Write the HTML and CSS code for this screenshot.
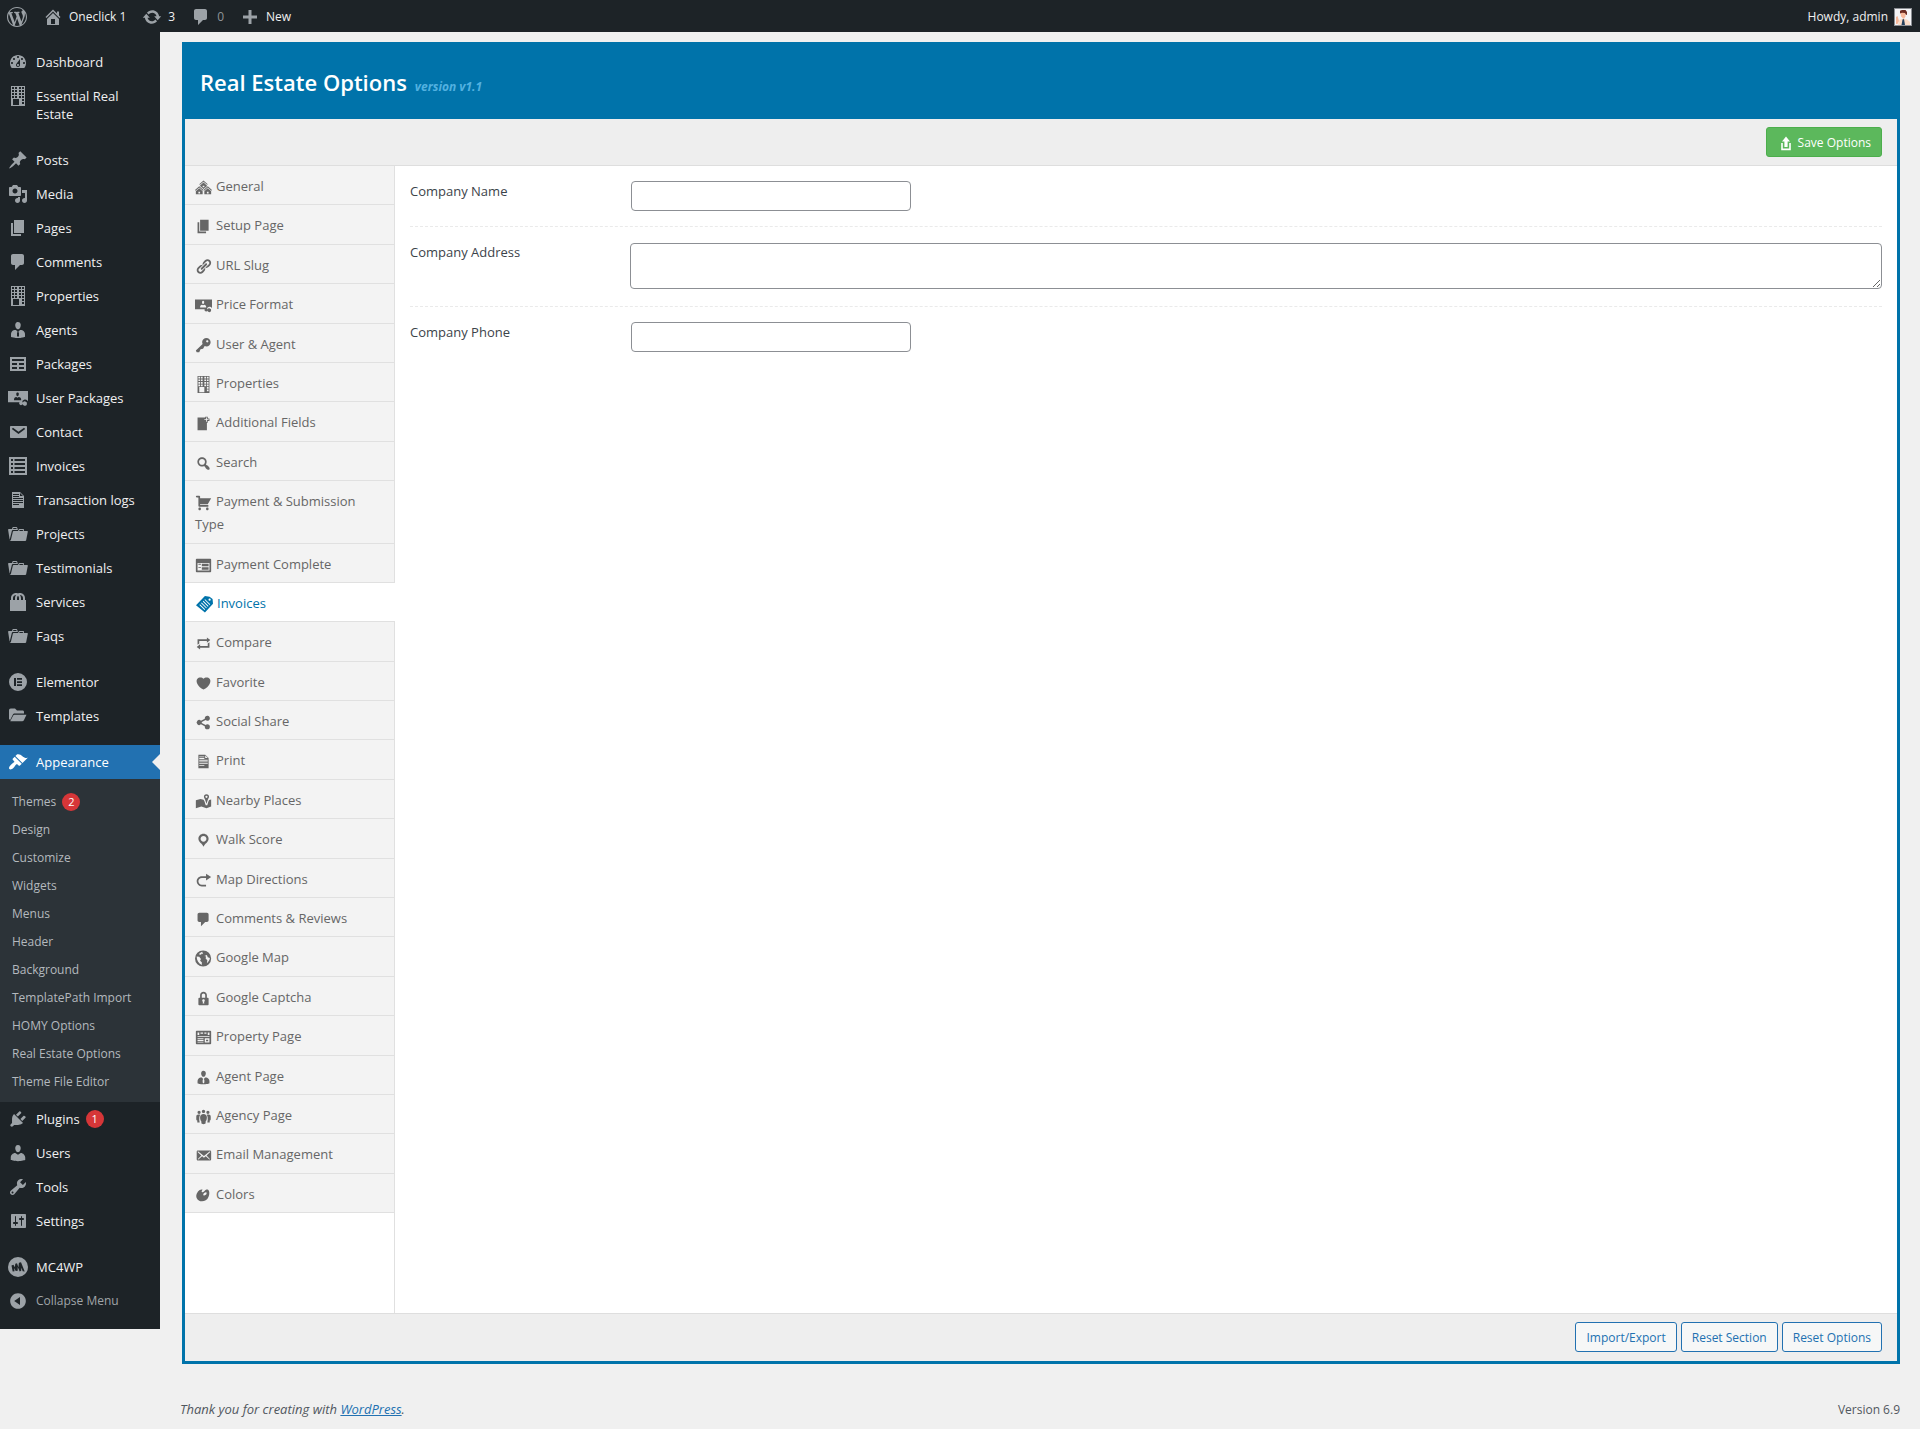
FILE: index.html
```html
<!DOCTYPE html>
<html lang="en">
<head>
<meta charset="utf-8">
<title>Real Estate Options</title>
<link rel="stylesheet" href="styles.css">
</head>
<body>
<svg class="sprite" aria-hidden="true">
  <symbol id="wordpress" viewBox="0 0 20 20"><path d="M20 10c0-5.51-4.49-10-10-10C4.48 0 0 4.49 0 10c0 5.52 4.48 10 10 10 5.51 0 10-4.48 10-10zM7.78 15.37L4.37 6.22c.55-.02 1.17-.08 1.17-.08.5-.06.44-1.13-.06-1.11 0 0-1.45.11-2.37.11-.18 0-.37 0-.58-.01C4.12 2.69 6.87 1.11 10 1.11c2.33 0 4.45.87 6.05 2.34-.68-.11-1.65.39-1.65 1.58 0 .74.45 1.36.9 2.1.35.61.55 1.36.55 2.46 0 1.49-1.4 5-1.4 5l-3.03-8.37c.54-.02.82-.17.82-.17.5-.05.44-1.25-.06-1.22 0 0-1.44.12-2.38.12-.87 0-2.33-.12-2.33-.12-.5-.03-.56 1.2-.06 1.22l.92.08 1.26 3.41zM17.41 10c.24-.64.74-1.87.43-4.25.7 1.29 1.05 2.71 1.05 4.25 0 3.29-1.73 6.24-4.4 7.78.97-2.59 1.94-5.2 2.92-7.78zM6.1 18.09C3.12 16.65 1.11 13.53 1.11 10c0-1.3.23-2.48.72-3.59C3.25 10.3 4.67 14.2 6.1 18.09zm4.03-6.63l2.58 6.98c-.86.29-1.76.45-2.71.45-.79 0-1.57-.11-2.29-.33.81-2.38 1.62-4.74 2.42-7.1z"/></symbol>
  <symbol id="home" viewBox="0 0 20 20"><path d="M16 8.5l1.53 1.53-1.06 1.06L10 4.6l-6.47 6.49-1.06-1.06L10 2.5l4 4v-2h2v4zm-6-2.46l6 5.99V18H4v-5.97zM12 17v-5H8v5h4z"/></symbol>
  <symbol id="update" viewBox="0 0 20 20"><path d="M10.2 3.28c3.53 0 6.43 2.61 6.92 6h2.08l-3.5 4-3.5-4h2.32c-.45-1.97-2.21-3.45-4.32-3.45-1.45 0-2.73.71-3.54 1.78L4.95 5.66C6.23 4.2 8.11 3.28 10.2 3.28zm-.4 13.44c-3.52 0-6.43-2.61-6.92-6H.8l3.5-4c1.17 1.33 2.33 2.67 3.5 4H5.48c.45 1.97 2.21 3.45 4.32 3.45 1.45 0 2.73-.71 3.54-1.78l1.71 1.95c-1.28 1.46-3.15 2.38-5.25 2.38z"/></symbol>
  <symbol id="plus" viewBox="0 0 20 20"><path d="M17 8.5v3h-5.500v5.500h-3v-5.500H3v-3h5.500V3h3v5.500z"/></symbol>
  <symbol id="dashboard" viewBox="0 0 20 20"><path d="M3.76 16h12.48c1.1-1.37 1.76-3.11 1.76-5 0-4.42-3.58-8-8-8s-8 3.58-8 8c0 1.89.66 3.63 1.76 5zM10 4c.55 0 1 .45 1 1s-.45 1-1 1-1-.45-1-1 .45-1 1-1zM6 6c.55 0 1 .45 1 1s-.45 1-1 1-1-.45-1-1 .45-1 1-1zm8 0c.55 0 1 .45 1 1s-.45 1-1 1-1-.45-1-1 .45-1 1-1zm-5.37 5.550L12 7v6c0 1.100-.9 2-2 2s-2-.9-2-2c0-.57.24-1.080.63-1.450zM4 10c.55 0 1 .45 1 1s-.45 1-1 1-1-.45-1-1 .45-1 1-1zm12 0c.55 0 1 .45 1 1s-.45 1-1 1-1-.45-1-1 .45-1 1-1zm-5 3c0-.55-.45-1-1-1s-1 .45-1 1 .45 1 1 1 1-.45 1-1z"/></symbol>
  <symbol id="building" viewBox="0 0 20 20"><path fill-rule="evenodd" d="M3 0h14v20H3zM4 1h2v2H4zM7 1h2v2H7zM11 1h2v2h-2zM14 1h2v2h-2zM4 4h2v2H4zM7 4h2v2H7zM11 4h2v2h-2zM14 4h2v2h-2zM4 7h2v2H4zM7 7h2v2H7zM11 7h2v2h-2zM14 7h2v2h-2zM4 10h2v2H4zM7 10h2v2H7zM11 10h2v2h-2zM14 10h2v2h-2zM5 13h6v6H5zM14 13h2v2h-2zM14 16h2v2h-2z"/></symbol>
  <symbol id="pin" viewBox="0 0 20 20"><path d="M10.44 3.020l1.820-1.820 6.360 6.350-1.830 1.820c-1.050-.68-2.480-.57-3.410.36l-.75.75c-.92.93-1.040 2.350-.35 3.410l-1.830 1.820-2.410-2.410-2.800 2.790c-.42.42-3.380 2.710-3.800 2.290s1.860-3.390 2.280-3.810l2.790-2.790L4.100 9.360l1.830-1.820c1.050.69 2.480.57 3.400-.36l.75-.75c.93-.92 1.050-2.350.36-3.410z"/></symbol>
  <symbol id="media" viewBox="0 0 20 20"><path d="M13 11V4c0-.55-.45-1-1-1h-1.670L9 1H5L3.670 3H2c-.55 0-1 .45-1 1v7c0 .55.45 1 1 1h10c.55 0 1-.45 1-1zM7 4.500c1.380 0 2.500 1.120 2.500 2.500S8.380 9.500 7 9.500 4.500 8.380 4.500 7 5.620 4.500 7 4.500zM14 6h5v10.500c0 1.380-1.120 2.500-2.500 2.500S14 17.880 14 16.500s1.120-2.500 2.500-2.500c.17 0 .34.02.5.05V9h-3V6zm-4 8.050V13h2v3.500c0 1.380-1.120 2.500-2.500 2.500S7 17.880 7 16.500 8.120 14 9.500 14c.17 0 .34.02.5.05z"/></symbol>
  <symbol id="page" viewBox="0 0 20 20"><path d="M6 15V2h10v13H6zm-1 1h8v2H3V5h2v11z"/></symbol>
  <symbol id="comment" viewBox="0 0 20 20"><path d="M5 2h9c1.100 0 2 .9 2 2v7c0 1.100-.9 2-2 2h-2l-5 5v-5H5c-1.100 0-2-.9-2-2V4c0-1.100.9-2 2-2z"/></symbol>
  <symbol id="agent" viewBox="0 0 20 20"><path d="M7.300 6l-.03-.19c-.04-.37-.05-.73-.03-1.080.02-.36.1-.71.25-1.040.14-.32.31-.61.52-.86s.49-.46.83-.6c.34-.15.72-.23 1.130-.23.69 0 1.260.2 1.710.59s.76.87.91 1.440.18 1.160.09 1.780l-.03.19c-.01.09-.05.25-.11.48-.05.24-.12.47-.2.69-.08.21-.19.45-.34.72-.14.27-.3.49-.47.69-.18.19-.4.34-.67.48-.27.13-.55.19-.86.19s-.59-.06-.87-.19c-.26-.13-.49-.29-.67-.5-.18-.2-.34-.42-.49-.66-.15-.25-.26-.49-.34-.73-.09-.25-.16-.47-.21-.67-.06-.21-.1-.37-.12-.5zm9.200 6.240c.41.7.5 1.410.5 2.140v2.490c0 .03-.12.08-.29.13-.18.04-.42.13-.97.27-.55.12-1.100.24-1.650.34s-1.190.19-1.950.27c-.75.08-1.460.12-2.130.12-.68 0-1.390-.04-2.140-.12-.75-.07-1.400-.17-1.980-.27-.58-.11-1.080-.23-1.560-.34-.49-.11-.8-.21-1.060-.29L3 16.870v-2.490c0-.75.07-1.460.46-2.150s.81-1.250 1.500-1.680C5.660 10.120 7.190 10 8 10l1.670 1.670L9 13v3l1.020 1.080L11 16v-3l-.68-1.330L11.970 10c.77 0 2.200.07 2.900.52.71.45 1.210 1.020 1.630 1.720z"/></symbol>
  <symbol id="table" viewBox="0 0 20 20"><path d="M18 17V3H2v14h16zM16 7H4V5h12v2zm-7 4H4V9h5v2zm7 0h-5V9h5v2zm-7 4H4v-2h5v2zm7 0h-5v-2h5v2z"/></symbol>
  <symbol id="money" viewBox="0 0 20 20"><path fill-rule="evenodd" d="M0 3h20v10.200a3.200 3.200 0 0 0-6 1.100H0zM8.300 5.600c-.2 1.700.4 2.600 1.200 2.600s1.500-.9 1.300-2.600c-.2-1.400-2.300-1.400-2.500 0zM6 12.300h7.200c.1-2.300-1-3.200-2.500-3.300l-1.200.8L8.300 9C6.800 9.100 6 10 6 12.300z"/><path d="M11.200 14.800a1.900 1.900 0 1 1 2.300 2.300 1.900 1.900 0 0 1-2.300-2.300zM14.700 15a2.200 2.200 0 1 1 1.500 2.700 2.200 2.200 0 0 1-1.500-2.700z"/></symbol>
  <symbol id="mail" viewBox="0 0 20 20"><path fill-rule="evenodd" d="M3 4h15c.6 0 1 .4 1 1v10c0 .6-.4 1-1 1H3c-.6 0-1-.4-1-1V5c0-.6.4-1 1-1zm7.500 8.100L17.200 7l-1.200-1.300-5.500 4.100L5 5.700 3.800 7z"/></symbol>
  <symbol id="list" viewBox="0 0 20 20"><path fill-rule="evenodd" d="M1 1h18v18H1zM3 3h2v2H3zM6.500 3H17v2H6.500zM3 7h2v2H3zM6.500 7H17v2H6.500zM3 11h2v2H3zM6.500 11H17v2H6.500zM3 15h2v2H3zM6.500 15H17v2H6.500z"/></symbol>
  <symbol id="doc" viewBox="0 0 20 20"><path fill-rule="evenodd" d="M12 2l4 4v12H4V2zM5 4v1h6V4zM12 3v3h3zM5 6v1h6V6zM5 8v1h10V8zM5 10v1h10v-1zM5 12v1h10v-1zM5 14v1h6v-1z"/></symbol>
  <symbol id="portfolio" viewBox="0 0 20 20"><path d="M4 5H.78c-.37 0-.74.32-.69.84l1.560 9.990S3.500 8.470 3.860 6.700c.11-.53.61-.7.98-.7H10s-.7-2.080-.77-2.310C9.110 3.250 8.890 3 8.450 3H5.140c-.36 0-.7.23-.8.64C4.250 4.040 4 5 4 5zm4.880 0h-4s.42-1 .87-1h2.130c.48 0 1 1 1 1zM2.670 16.250c-.31.47-.76.75-1.260.75h15.730c.54 0 .92-.31 1.030-.83.44-2.190 1.680-8.440 1.680-8.440.07-.5-.3-.73-.62-.73H16V5.530c0-.16-.26-.53-.66-.53h-3.760c-.52 0-.87.58-.87.58L10 7H5.590c-.32 0-.63.19-.69.5 0 0-1.590 6.700-1.720 7.330-.07.37-.22.99-.51 1.420zM15.380 7H11s.58-1 1.130-1h2.290c.71 0 .96 1 .96 1z"/></symbol>
  <symbol id="products" viewBox="0 0 20 20"><path d="M17 8h1v11H2V8h1V6c0-2.760 2.240-5 5-5 .71 0 1.390.15 2 .42.61-.27 1.290-.42 2-.42 2.760 0 5 2.240 5 5v2zM5 6v2h2V6c0-1.130.39-2.160 1.020-3H8C6.350 3 5 4.350 5 6zm10 2V6c0-1.650-1.350-3-3-3h-.02c.63.84 1.020 1.870 1.020 3v2h2zm-5-4.220C9.390 4.330 9 5.120 9 6v2h2V6c0-.88-.39-1.670-1-2.220z"/></symbol>
  <symbol id="elementor" viewBox="0 0 20 20"><path fill-rule="evenodd" d="M10 1a9 9 0 1 1 0 18 9 9 0 0 1 0-18zM6 6v8h2V6zM9 6v1.700h5V6zM9 9.200v1.700h5V9.200zM9 12.300V14h5v-1.700z"/></symbol>
  <symbol id="folder" viewBox="0 0 20 20"><path d="M1 4.500c0-1.300.6-2 1.800-2H7l2 2h5.500c.9 0 1.500.5 1.500 1.500v1.500H6.800c-1 0-1.600.4-2 1.200L2.200 14 1 13zM6.500 8.800H18.500l-2.600 5.400c-.4.700-1 1-1.800 1H2.200L5.100 9.700c.3-.6.700-.9 1.400-.9z"/></symbol>
  <symbol id="brush" viewBox="0 0 20 20"><path d="M14.480 11.060L7.410 3.990l1.500-1.500c.5-.56 2.300-.47 3.510.32 1.210.8 1.430 1.280 2.910 2.100 1.180.64 2.450 1.260 4.450.85zm-.71.71L6.700 4.700 4.930 6.470c-.39.39-.39 1.020 0 1.410l1.060 1.060c.39.39.39 1.030 0 1.420-.6.6-1.430 1.110-2.210 1.690-.35.26-.7.53-1.010.84C1.430 14.230.4 16.080 1.400 17.070c.99 1 2.840-.03 4.180-1.360.31-.31.58-.66.85-1.020.57-.78 1.080-1.610 1.690-2.210.39-.39 1.020-.39 1.410 0l1.060 1.060c.39.39 1.020.39 1.410 0z"/></symbol>
  <symbol id="plugin" viewBox="0 0 20 20"><path d="M13.110 4.360L9.870 7.600 8 5.730l3.240-3.240c.35-.34 1.050-.2 1.560.32.52.51.66 1.210.31 1.550zm-8 1.770l.91-1.120 9.010 9.010-1.190.84c-.71.71-2.630 1.160-3.820 1.160H6.140L4.900 17.260c-.59.59-1.540.59-2.120 0-.59-.58-.59-1.530 0-2.120l1.240-1.240v-3.880c0-1.130.4-3.190 1.090-3.890zm7.260 3.970l3.240-3.240c.34-.35 1.040-.21 1.550.31.52.51.66 1.210.31 1.550l-3.240 3.250z"/></symbol>
  <symbol id="user" viewBox="0 0 20 20"><path d="M10 9.250c-2.270 0-2.730-3.440-2.730-3.440C7 4.020 7.820 2 9.970 2c2.160 0 2.980 2.020 2.710 3.810 0 0-.41 3.440-2.680 3.440zm0 2.570L12.720 10c2.390 0 4.520 2.330 4.520 4.530v2.490s-3.650 1.130-7.240 1.130c-3.650 0-7.240-1.130-7.240-1.130v-2.490c0-2.250 1.940-4.480 4.470-4.480z"/></symbol>
  <symbol id="wrench" viewBox="0 0 20 20"><path d="M16.680 9.770c-1.340 1.340-3.300 1.670-4.950.99l-5.410 6.520c-.99.99-2.590.99-3.580 0s-.99-2.590 0-3.570l6.520-5.420c-.68-1.650-.35-3.610.99-4.950 1.280-1.280 3.120-1.620 4.720-1.060l-2.890 2.890 2.820 2.820 2.860-2.870c.53 1.580.18 3.390-1.080 4.650zM3.810 16.210c.4.39 1.040.39 1.430 0 .4-.4.4-1.040 0-1.430-.39-.4-1.030-.4-1.430 0-.39.39-.39 1.030 0 1.430z"/></symbol>
  <symbol id="settings" viewBox="0 0 20 20"><path d="M18 16V4c0-.55-.45-1-1-1H4c-.55 0-1 .45-1 1v12c0 .55.45 1 1 1h13c.55 0 1-.45 1-1zM8 11h1c.55 0 1 .45 1 1s-.45 1-1 1H8v1.500c0 .28-.22.5-.5.5s-.5-.22-.5-.5V13H6c-.55 0-1-.45-1-1s.45-1 1-1h1V5.500c0-.28.22-.5.5-.5s.5.22.5.5V11zm5-2h-1c-.55 0-1-.45-1-1s.45-1 1-1h1V5.500c0-.28.22-.5.5-.5s.5.22.5.5V7h1c.55 0 1 .45 1 1s-.45 1-1 1h-1v5.500c0 .28-.22.5-.5.5s-.5-.22-.5-.5V9z"/></symbol>
  <symbol id="mc4wp" viewBox="0 0 20 20"><path fill-rule="evenodd" d="M10 0a10 10 0 1 1 0 20 10 10 0 0 1 0-20zM3.500 8.500l1.200 6 1.800-.3-.3-3.200 1.500 3 2-.3V10l2 4.500 1.500-.7.200-3 1.300 3.500 2 .2-3.700-9.300-2.100.6-.5 4.400-1.400-4-1.700.5-.4 3.500-1.500-2.500z"/></symbol>
  <symbol id="collapse" viewBox="0 0 20 20"><path d="M10 2.160c4.330 0 7.840 3.510 7.840 7.840s-3.510 7.840-7.840 7.840S2.160 14.330 2.160 10 5.710 2.160 10 2.160zm2 11.720V6.120L6.180 9.970z"/></symbol>
  <symbol id="multisite" viewBox="0 0 20 20"><path d="M14.270 6.870L10 3.140 5.730 6.870 5 6.140l5-4.380 5 4.380zM14 8.420l-4.050 3.430L6 8.380v-.74l4-3.500 4 3.500v.78zM11 9.700V8H9v1.700h2zm-1.730 4.030L5 10 .73 13.730 0 13l5-4.380L10 13zm10 0L15 10l-4.270 3.730L10 13l5-4.380L20 13zM5 11l4 3.500V18H1v-3.500zm10 0l4 3.500V18h-8v-3.500zm-9 6v-2H4v2h2zm10 0v-2h-2v2h2z"/></symbol>
  <symbol id="link" viewBox="0 0 20 20"><path d="M17.740 2.760c1.680 1.690 1.680 4.410 0 6.100l-1.530 1.520c-1.120 1.120-2.700 1.470-4.140 1.090l2.620-2.610.76-.77.76-.76c.84-.84.84-2.200 0-3.040-.84-.85-2.200-.85-3.040 0l-.77.76-3.380 3.380c-.37-1.440-.02-3.020 1.100-4.140l1.520-1.530c1.690-1.680 4.420-1.680 6.100 0zM8.590 13.430l5.340-5.340c.42-.42.42-1.100 0-1.520-.44-.43-1.130-.39-1.530 0l-5.330 5.340c-.42.42-.42 1.100 0 1.520.44.43 1.130.39 1.520 0zm-.76 2.290l4.140-4.150c.38 1.440.03 3.020-1.090 4.140l-1.520 1.530c-1.690 1.680-4.410 1.680-6.100 0-1.680-1.680-1.680-4.420 0-6.100l1.530-1.520c1.120-1.120 2.700-1.470 4.140-1.100l-4.140 4.150c-.85.84-.85 2.200 0 3.050.84.84 2.200.84 3.040 0z"/></symbol>
  <symbol id="key" viewBox="0 0 20 20"><path d="M16.950 2.580c1.960 1.950 1.960 5.120 0 7.070-1.510 1.510-3.750 1.840-5.590 1.010l-1.870 3.310-2.990.31L5 18H2l-1-2 7.950-7.690c-.92-1.870-.62-4.180.93-5.730 1.950-1.960 5.120-1.960 7.070 0zm-2.510 3.790c.74 0 1.330-.6 1.330-1.340 0-.73-.59-1.330-1.330-1.330-.73 0-1.330.6-1.330 1.330 0 .74.6 1.340 1.330 1.340z"/></symbol>
  <symbol id="addpage" viewBox="0 0 20 20"><path d="M17 7V4h-2V2h-3v1H3v15h11V9h1V7h2zm-1-2v1h-2v2h-1V6h-2V5h2V3h1v2h2z"/></symbol>
  <symbol id="search" viewBox="0 0 20 20"><path d="M12.140 4.180c1.870 1.870 2.110 4.750.72 6.890.12.1.22.21.36.31.2.16.47.36.81.59.34.24.56.39.66.47.42.31.73.57.94.78.32.32.6.65.84 1 .25.35.44.69.59 1.040.14.35.21.68.18 1-.02.32-.14.59-.36.81s-.49.34-.81.36c-.31.02-.65-.04-.99-.19-.35-.14-.7-.34-1.040-.59-.35-.24-.68-.52-1-.84-.21-.21-.47-.52-.77-.93-.1-.13-.25-.35-.47-.66-.22-.32-.4-.57-.56-.78-.16-.2-.29-.35-.44-.5-2.070 1.090-4.690.76-6.440-.98-2.140-2.150-2.140-5.640 0-7.780 2.150-2.150 5.630-2.150 7.780 0zm-1.410 6.360c1.360-1.370 1.360-3.580 0-4.950-1.370-1.370-3.590-1.370-4.950 0-1.370 1.370-1.370 3.580 0 4.950 1.360 1.370 3.580 1.370 4.950 0z"/></symbol>
  <symbol id="cart" viewBox="0 0 20 20"><path d="M6 13h9c.55 0 1 .45 1 1s-.45 1-1 1H5c-.55 0-1-.45-1-1V4H2c-.55 0-1-.45-1-1s.45-1 1-1h3c.55 0 1 .45 1 1v2h13l-4 7H6v1zm-.5 3c.83 0 1.500.67 1.500 1.500S6.330 19 5.500 19 4 18.330 4 17.500 4.670 16 5.500 16zm9 0c.83 0 1.500.67 1.500 1.500s-.67 1.500-1.500 1.500-1.500-.67-1.500-1.500.67-1.500 1.500-1.500z"/></symbol>
  <symbol id="form" viewBox="0 0 20 20"><path d="M2 2h16c.55 0 1 .45 1 1v14c0 .55-.45 1-1 1H2c-.55 0-1-.45-1-1V3c0-.55.45-1 1-1zm15 14V7H3v9h14zM4 8v1h3V8H4zm4 0v3h8V8H8zm-4 4v1h3v-1H4zm4 0v3h8v-3H8z"/></symbol>
  <symbol id="invoice" viewBox="0 0 20 20"><path fill-rule="evenodd" d="M10.500 0L16 1l3.500 2.500.5 5.500-9.500 10.500L0 11zM16 3a1.300 1.300 0 1 0 0 2.600A1.300 1.300 0 0 0 16 3zM10 4.500l6 6 .7-.8-6-6zM8 6.500l6 6 .7-.8-6-6zM6 8.500l6 6 .7-.8-6-6zM4 10.500l6 6 .7-.8-6-6z"/></symbol>
  <symbol id="repeat" viewBox="0 0 20 20"><path d="M5 7v3l-2 1.500V5h11V3l4 3.010L14 9V7H5zm10 6v-3l2-1.500V15H6v2l-4-3.010L6 11v2h9z"/></symbol>
  <symbol id="heart" viewBox="0 0 20 20"><path d="M10 17.120c3.330-1.400 5.740-3.790 7.040-6.210 1.280-2.410 1.460-4.810.32-6.250-1.030-1.290-2.370-1.780-3.730-1.740s-2.680.63-3.630 1.460c-.95-.83-2.270-1.420-3.630-1.460s-2.700.45-3.730 1.740c-1.140 1.440-.96 3.840.34 6.250 1.280 2.420 3.690 4.810 7.020 6.210z"/></symbol>
  <symbol id="share" viewBox="0 0 20 20"><path d="M14.500 12a3 3 0 0 0-2 .8L8 10.500v-1l4.500-2.300a3 3 0 1 0-1-2.200v.5L7 7.800a3 3 0 1 0 0 4.400l4.500 2.300v.5a3 3 0 1 0 3-3z"/></symbol>
  <symbol id="mapmarker" viewBox="0 0 20 20"><path fill-rule="evenodd" d="M13.500 1.500a3 3 0 0 1 3 3c0 1.300-.8 1.900-1.300 3l-1.700 5-1.700-5c-.5-1.100-1.300-1.700-1.300-3a3 3 0 0 1 3-3zm0 1.700a1.300 1.300 0 1 0 0 2.600 1.300 1.300 0 0 0 0-2.600z"/><path d="M1 8.500L6.500 7l3.500.8c.5.600.8 1.200 1.100 2l1.500 4.700h1.800l1.500-4.700c.2-.6.400-1.100.7-1.600L19 7.500v8.500l-5.500 2-6-2L1 18z"/></symbol>
  <symbol id="location" viewBox="0 0 20 20"><path d="M10 2C6.690 2 4 4.690 4 8c0 2.020 1.170 3.710 2.530 4.890.43.37 1.180.96 1.850 1.830.74.97 1.410 2.010 1.620 2.710.21-.7.88-1.740 1.620-2.710.67-.87 1.420-1.460 1.850-1.830C14.830 11.710 16 10.020 16 8c0-3.310-2.690-6-6-6zm0 2.560c1.900 0 3.440 1.540 3.440 3.440S11.900 11.440 10 11.440 6.560 9.900 6.560 8 8.100 4.560 10 4.560z"/></symbol>
  <symbol id="redo" viewBox="0 0 20 20"><path d="M8 5h5V2l6 4-6 4V7H8c-2.200 0-4 1.800-4 4s1.800 4 4 4h5v2H8c-3.300 0-6-2.700-6-6s2.700-6 6-6z"/></symbol>
  <symbol id="globe" viewBox="0 0 20 20"><path fill-rule="evenodd" d="M9.500.5a9.500 9.500 0 1 1 0 19 9.500 9.500 0 0 1 0-19zM2 7.500C2 12 4 15.500 8 17.500v-3l-2-2 1-2L5 8zM8.500 2C7 2.500 5.500 3.500 4.500 5L7 5.500 8 4l1.500 1zM11 7l2 .5L12.500 10l2 2-.5 3.500c2-1.500 3.300-3.500 3.500-6L15 8.500 14 6z"/></symbol>
  <symbol id="lock" viewBox="0 0 20 20"><path fill-rule="evenodd" d="M14 9h1c.55 0 1 .45 1 1v7c0 .55-.45 1-1 1H5c-.55 0-1-.45-1-1v-7c0-.55.45-1 1-1h1V6c0-2.210 1.790-4 4-4s4 1.790 4 4zm-2 0V6c0-1.100-.9-2-2-2s-2 .9-2 2v3zm-1 7l-.36-2.150c.51-.24.86-.75.86-1.350 0-.83-.67-1.500-1.500-1.500s-1.500.67-1.500 1.500c0 .6.35 1.110.86 1.350L9 16z"/></symbol>
  <symbol id="layout" viewBox="0 0 20 20"><path fill-rule="evenodd" d="M2 2h16c.6 0 1 .4 1 1v14c0 .6-.4 1-1 1H2c-.6 0-1-.4-1-1V3c0-.6.4-1 1-1zM3 4v3h2V4zM6.500 4v1.500h3V4zM11 4v1.500h2.500V4zM15 4v3h2V4zM3 8.500v1h14v-1zM3 11v1h7v-1zM3 13v1h7v-1zM3 15v1h7v-1zM11.500 11v5H17v-5zM13 12.500h2.500v2H13z"/></symbol>
  <symbol id="group" viewBox="0 0 20 20"><path d="M10 2a2 2 0 1 0 0 4 2 2 0 0 0 0-4zM4.800 3.200a1.900 1.900 0 1 0 0 3.800 1.900 1.900 0 0 0 0-3.800zM15.200 3.200a1.900 1.900 0 1 0 0 3.800 1.900 1.900 0 0 0 0-3.800zM4 7.700c-1.600 0-2.500 1-2.500 2.500v3c0 1 .7 1.500 1.200 1.500V17h2.800c-.5-2-.7-4-.4-6 .2-1.400.6-2.400 1.200-3.100-.7-.2-1.500-.2-2.300-.2zM16 7.700c1.600 0 2.500 1 2.500 2.500v3c0 1-.7 1.500-1.200 1.500V17h-2.800c.5-2 .7-4 .4-6-.2-1.400-.6-2.400-1.200-3.100.7-.2 1.500-.2 2.300-.2zM10 7c-2.500 0-4 1.500-4 4 0 2 .5 4 1.500 5v2c0 1.300 5 1.300 5 0v-2c1-1 1.500-3 1.500-5 0-2.500-1.500-4-4-4z"/></symbol>
  <symbol id="envelope" viewBox="0 0 20 20"><path d="M19 14.500v-9c0-.83-.67-1.500-1.500-1.500H3.490c-.83 0-1.500.67-1.500 1.500v9c0 .83.67 1.500 1.500 1.500H17.500c.83 0 1.500-.67 1.500-1.500zm-1.310-9.110c.33.33.15.67-.03.84L13.600 9.950l3.900 4.060c.12.14.2.36.06.51-.13.16-.43.15-.56.05l-4.370-3.730-2.140 1.950-2.130-1.950-4.370 3.730c-.13.1-.43.11-.56-.05-.14-.15-.06-.37.06-.51l3.900-4.060-4.060-3.720c-.18-.17-.36-.51-.03-.84s.67-.17.95.07l6.240 5.040 6.250-5.040c.28-.24.62-.4.95-.07z"/></symbol>
  <symbol id="palette" viewBox="0 0 20 20"><path d="M8.550 3.060c1.010.34-1.950 2.010-.1 3.130 1.040.63 3.310-2.220 4.450-2.860.97-.54 2.670-.65 3.530 1.230 1.090 2.380.14 8.570-3.790 11.060-3.970 2.500-8.970 1.230-10.700-2.660-2.010-4.530 3.120-11.090 6.610-9.900zm1.210 6.450c.73 1.640 4.700-.5 3.790-2.800-.59-1.490-4.480 1.250-3.790 2.800z"/></symbol>
  <symbol id="upload" viewBox="0 0 20 20"><path d="M8 15V8H5l5-6 5 6h-3v7zM4 10h2v7h8v-7h2v9H4z"/></symbol>
</svg>

<header class="topbar">
  <nav class="topbar-links" aria-label="Toolbar">
    <a class="topbar-logo" href="#" aria-label="About WordPress"><svg><use href="#wordpress"/></svg></a>
    <a href="#"><svg><use href="#home"/></svg>Oneclick 1</a>
    <a href="#"><svg><use href="#update"/></svg>3</a>
    <a class="is-muted" href="#"><svg><use href="#comment"/></svg>0</a>
    <a href="#"><svg><use href="#plus"/></svg>New</a>
  </nav>
  <a class="account" href="#">Howdy, admin
    <svg class="avatar" viewBox="0 0 16 16"><path fill="#f4f4f6" d="M0 0h16v16H0z"/><path fill="#fbdcc6" d="M4 11l4-1.500 4 1 3 2.500v3H3z"/><path fill="#f6b89a" d="M5.500 2.500h5v5L8.800 10 6 7.500zM1 8l1.500-1L4 12l-1.500 3H1z"/><path fill="#6b2a20" d="M5 4.500V1.800L7 1h3.500L12 3v3l-1.300-.5-.7-1.500-3-.3z"/><path fill="#27415c" d="M7.500 10.500l1.500-.5 1 6H6.500z"/></svg>
  </a>
</header>

<div class="layout">
  <nav class="menu" aria-label="Main menu">
    <ul>
      <li><a href="#"><svg><use href="#dashboard"/></svg><span>Dashboard</span></a></li>
      <li><a href="#"><svg><use href="#building"/></svg><span>Essential Real Estate</span></a></li>
    </ul>
    <ul>
      <li><a href="#"><svg><use href="#pin"/></svg><span>Posts</span></a></li>
      <li><a href="#"><svg><use href="#media"/></svg><span>Media</span></a></li>
      <li><a href="#"><svg><use href="#page"/></svg><span>Pages</span></a></li>
      <li><a href="#"><svg><use href="#comment"/></svg><span>Comments</span></a></li>
      <li><a href="#"><svg><use href="#building"/></svg><span>Properties</span></a></li>
      <li><a href="#"><svg><use href="#agent"/></svg><span>Agents</span></a></li>
      <li><a href="#"><svg><use href="#table"/></svg><span>Packages</span></a></li>
      <li><a href="#"><svg><use href="#money"/></svg><span>User Packages</span></a></li>
      <li><a href="#"><svg><use href="#mail"/></svg><span>Contact</span></a></li>
      <li><a href="#"><svg><use href="#list"/></svg><span>Invoices</span></a></li>
      <li><a href="#"><svg><use href="#doc"/></svg><span>Transaction logs</span></a></li>
      <li><a href="#"><svg><use href="#portfolio"/></svg><span>Projects</span></a></li>
      <li><a href="#"><svg><use href="#portfolio"/></svg><span>Testimonials</span></a></li>
      <li><a href="#"><svg><use href="#products"/></svg><span>Services</span></a></li>
      <li><a href="#"><svg><use href="#portfolio"/></svg><span>Faqs</span></a></li>
    </ul>
    <ul>
      <li><a href="#"><svg><use href="#elementor"/></svg><span>Elementor</span></a></li>
      <li><a href="#"><svg><use href="#folder"/></svg><span>Templates</span></a></li>
    </ul>
    <ul>
      <li>
        <a class="is-current" href="#"><svg><use href="#brush"/></svg><span>Appearance</span></a>
        <ul class="submenu">
          <li><a href="#">Themes <span class="badge">2</span></a></li>
          <li><a href="#">Design</a></li>
          <li><a href="#">Customize</a></li>
          <li><a href="#">Widgets</a></li>
          <li><a href="#">Menus</a></li>
          <li><a href="#">Header</a></li>
          <li><a href="#">Background</a></li>
          <li><a href="#">TemplatePath Import</a></li>
          <li><a href="#">HOMY Options</a></li>
          <li><a href="#">Real Estate Options</a></li>
          <li><a href="#">Theme File Editor</a></li>
        </ul>
      </li>
      <li><a href="#"><svg><use href="#plugin"/></svg><span>Plugins</span><span class="badge">1</span></a></li>
      <li><a href="#"><svg><use href="#user"/></svg><span>Users</span></a></li>
      <li><a href="#"><svg><use href="#wrench"/></svg><span>Tools</span></a></li>
      <li><a href="#"><svg><use href="#settings"/></svg><span>Settings</span></a></li>
    </ul>
    <ul>
      <li><a href="#"><svg><use href="#mc4wp"/></svg><span>MC4WP</span></a></li>
      <li><button class="collapse" type="button"><svg><use href="#collapse"/></svg><span>Collapse Menu</span></button></li>
    </ul>
  </nav>

  <div class="page">
    <main class="panel">
      <header class="panel-head">
        <h1>Real Estate Options</h1>
        <em>version v1.1</em>
      </header>
      <form class="options">
        <div class="bar bar-top">
          <button class="btn btn-save" type="submit"><svg><use href="#upload"/></svg>Save Options</button>
        </div>
        <div class="options-body">
          <nav class="tabs" aria-label="Option sections">
            <ul>
              <li><a href="#"><svg><use href="#multisite"/></svg>General</a></li>
              <li><a href="#"><svg><use href="#page"/></svg>Setup Page</a></li>
              <li><a href="#"><svg><use href="#link"/></svg>URL Slug</a></li>
              <li><a href="#"><svg><use href="#money"/></svg>Price Format</a></li>
              <li><a href="#"><svg><use href="#key"/></svg>User &amp; Agent</a></li>
              <li><a href="#"><svg><use href="#building"/></svg>Properties</a></li>
              <li><a href="#"><svg><use href="#addpage"/></svg>Additional Fields</a></li>
              <li><a href="#"><svg><use href="#search"/></svg>Search</a></li>
              <li><a href="#"><svg><use href="#cart"/></svg>Payment &amp; Submission Type</a></li>
              <li><a href="#"><svg><use href="#form"/></svg>Payment Complete</a></li>
              <li class="is-active"><a href="#" aria-current="page"><svg><use href="#invoice"/></svg>Invoices</a></li>
              <li><a href="#"><svg><use href="#repeat"/></svg>Compare</a></li>
              <li><a href="#"><svg><use href="#heart"/></svg>Favorite</a></li>
              <li><a href="#"><svg><use href="#share"/></svg>Social Share</a></li>
              <li><a href="#"><svg><use href="#doc"/></svg>Print</a></li>
              <li><a href="#"><svg><use href="#mapmarker"/></svg>Nearby Places</a></li>
              <li><a href="#"><svg><use href="#location"/></svg>Walk Score</a></li>
              <li><a href="#"><svg><use href="#redo"/></svg>Map Directions</a></li>
              <li><a href="#"><svg><use href="#comment"/></svg>Comments &amp; Reviews</a></li>
              <li><a href="#"><svg><use href="#globe"/></svg>Google Map</a></li>
              <li><a href="#"><svg><use href="#lock"/></svg>Google Captcha</a></li>
              <li><a href="#"><svg><use href="#layout"/></svg>Property Page</a></li>
              <li><a href="#"><svg><use href="#agent"/></svg>Agent Page</a></li>
              <li><a href="#"><svg><use href="#group"/></svg>Agency Page</a></li>
              <li><a href="#"><svg><use href="#envelope"/></svg>Email Management</a></li>
              <li><a href="#"><svg><use href="#palette"/></svg>Colors</a></li>
            </ul>
          </nav>
          <div class="fields">
            <div class="field">
              <label for="company-name">Company Name</label>
              <input id="company-name" type="text">
            </div>
            <div class="field">
              <label for="company-address">Company Address</label>
              <textarea id="company-address"></textarea>
            </div>
            <div class="field">
              <label for="company-phone">Company Phone</label>
              <input id="company-phone" type="text">
            </div>
          </div>
        </div>
        <div class="bar bar-bottom">
          <button class="btn" type="button">Import/Export</button>
          <button class="btn" type="button">Reset Section</button>
          <button class="btn" type="button">Reset Options</button>
        </div>
      </form>
    </main>
    <footer class="page-footer">
      <p><em>Thank you for creating with <a href="#">WordPress</a>.</em></p>
      <p>Version 6.9</p>
    </footer>
  </div>
</div>
</body>
</html>
```
FILE: styles.css
```css
*,
*::before,
*::after {
  box-sizing: border-box;
}

body {
  display: flex;
  flex-direction: column;
  min-height: 100vh;
  margin: 0;
  background: #f0f0f0;
  color: #3c434a;
  font-family: "Open Sans", "Noto Sans", sans-serif;
  font-size: 13px;
  line-height: 18px;
}

ul {
  margin: 0;
  padding: 0;
  list-style: none;
}

a {
  color: #2271b1;
}

svg {
  flex: none;
  width: 20px;
  height: 20px;
  fill: currentColor;
}

.sprite {
  display: none;
}

/* Toolbar */

.topbar {
  display: flex;
  justify-content: space-between;
  height: 32px;
  padding: 1px 8px 0 7px;
  background: #1d2327;
  font-size: 12px;
}

.topbar a {
  display: flex;
  align-items: center;
  color: #f0f0f1;
  text-decoration: none;
}

.topbar-links {
  display: flex;
  gap: 16px;
}

.topbar-links a {
  gap: 6px;
}

.topbar-links svg {
  color: #9ca2a7;
}

.topbar .is-muted {
  color: #8f9498;
}

.topbar .account {
  gap: 6px;
}

.avatar {
  width: 18px;
  height: 18px;
  border: 1px solid #8c8f94;
}

/* Main menu */

.layout {
  display: flex;
  flex: 1;
  align-items: stretch;
}

.menu {
  align-self: flex-start;
  width: 160px;
  padding: 13px 0 11px;
  background: #1d2327;
}

.menu > ul + ul {
  margin-top: 12px;
}

.menu a,
.menu button {
  display: flex;
  gap: 8px;
  width: 100%;
  padding: 8px 10px 8px 8px;
  border: 0;
  background: none;
  color: #f0f0f1;
  font: inherit;
  text-align: left;
  text-decoration: none;
}

.menu svg {
  margin: -1px 0;
  color: #9ca2a7;
}

.menu .is-current {
  position: relative;
  background: #2271b1;
  color: #fff;
}

.menu .is-current svg {
  color: #fff;
}

.menu .is-current::after {
  position: absolute;
  top: 9px;
  right: 0;
  border: 8px solid transparent;
  border-left-width: 0;
  border-right-color: #f0f0f0;
  content: "";
}

.menu .submenu {
  padding: 9px 0 6px;
  background: #2c3338;
}

.menu .submenu a {
  gap: 6px;
  padding: 5px 12px;
  color: #b4b9be;
  font-size: 12px;
}

.menu .badge {
  min-width: 18px;
  border-radius: 9px;
  background: #d63638;
  color: #fff;
  font-size: 11px;
  line-height: 18px;
  text-align: center;
}

.menu a > span + .badge {
  margin-left: -2px;
}

.menu .collapse {
  color: #a0a5a9;
  font-size: 12px;
}

/* Options panel */

.page {
  display: flex;
  flex: 1;
  flex-direction: column;
  min-width: 0;
  padding: 10px 20px 0;
}

.panel {
  display: flex;
  flex: 1;
  flex-direction: column;
  margin-left: 2px;
  border: 3px solid #0073aa;
  background: #fff;
}

.panel-head {
  display: flex;
  align-items: baseline;
  gap: 8px;
  padding: 21px 15px;
  background: #0073aa;
  color: #fff;
}

.panel-head h1 {
  margin: 0;
  font-size: 22px;
  font-weight: 600;
  line-height: 32px;
}

.panel-head em {
  color: #52b1e0;
  font-size: 12px;
  font-weight: 700;
}

.options {
  display: flex;
  flex: 1;
  flex-direction: column;
}

.bar {
  display: flex;
  justify-content: flex-end;
  gap: 4px;
  padding: 8px 15px;
  background: #eee;
}

.bar-top {
  border-bottom: 1px solid #dedede;
}

.bar-bottom {
  padding-bottom: 9px;
  border-top: 1px solid #dedede;
}

.btn {
  display: flex;
  align-items: center;
  height: 30px;
  padding: 2px 10px 0;
  border: 1px solid #2271b1;
  border-radius: 3px;
  background: #f6f7f7;
  color: #2271b1;
  font: inherit;
  font-size: 12px;
}

.btn-save {
  gap: 4px;
  padding-left: 11px;
  border-color: #4cae4c;
  background: #5cb85c;
  color: #fff;
}

.btn-save svg {
  width: 16px;
  height: 16px;
}

.options-body {
  display: flex;
  flex: 1;
}

/* The rows share the height that is left above the empty strip. */

.tabs {
  display: flex;
  flex-direction: column;
  width: 210px;
  padding-bottom: 100px;
  border-right: 1px solid #e0e0e0;
}

.tabs ul {
  display: flex;
  flex: 1;
  flex-direction: column;
}

.tabs li {
  flex: 1 0 auto;
  border-bottom: 1px solid #e0e0e0;
  background: #f3f3f3;
}

.tabs a {
  display: block;
  padding: 9px 10px 6px;
  color: #666;
  line-height: 23px;
  text-decoration: none;
}

.tabs svg {
  width: 17px;
  height: 17px;
  margin-right: 4px;
  vertical-align: -5px;
}

.tabs .is-active {
  margin-right: -1px;
  border-left: 1px solid #fff;
  background: #fff;
}

.tabs .is-active a {
  color: #0073aa;
}

.fields {
  flex: 1;
  padding: 0 15px;
}

.field {
  display: grid;
  grid-template-columns: 220px 1fr;
  align-items: start;
  padding: 15px 0;
}

.field + .field {
  border-top: 1px dashed #eaeaea;
}

.field label {
  line-height: 20px;
}

.field input,
.field textarea {
  border: 1px solid #8c8f94;
  border-radius: 4px;
  background: #fff;
  color: #2c3338;
  font: inherit;
}

.field input {
  width: 280px;
  height: 30px;
  margin: 0 1px;
  padding: 0 8px;
}

.field textarea {
  width: 100%;
  height: 46px;
  margin: 1px 0 2px;
  padding: 2px 6px;
  resize: vertical;
}

/* Footer */

.page-footer {
  display: flex;
  justify-content: space-between;
  padding: 36px 0 10px;
  color: #50575e;
  font-size: 12px;
}

.page-footer p {
  margin: 0;
  line-height: 19px;
}

.page-footer em {
  font-size: 13px;
}
```
